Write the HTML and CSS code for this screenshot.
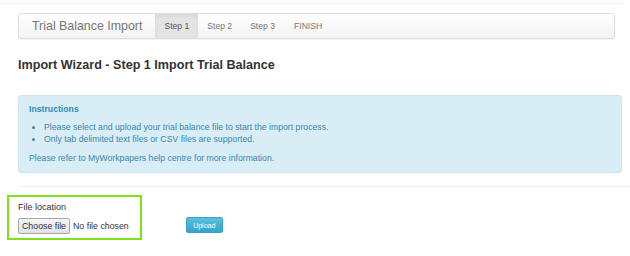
FILE: index.html
```html
<!DOCTYPE html>
<html lang="en">
<head>
  <meta charset="UTF-8" />
  <title>Trial Balance Import</title>
  <link rel="stylesheet" href="styles.css">
</head>
<body>

  <div class="topline"></div>

  <div class="navbar">
    <span class="brand">Trial Balance Import</span>
    <ul class="steps">
      <li class="active">Step 1</li>
      <li>Step 2</li>
      <li>Step 3</li>
      <li>FINISH</li>
    </ul>
  </div>

  <h1>Import Wizard - Step 1 Import Trial Balance</h1>

  <div class="alert">
    <div class="alert-title">Instructions</div>
    <ul>
      <li>Please select and upload your trial balance file to start the import process.</li>
      <li>Only tab delimited text files or CSV files are supported.</li>
    </ul>
    <p>Please refer to MyWorkpapers help centre for more information.</p>
  </div>

  <div class="divider"></div>

  <div class="upload-row">
    <div class="file-box">
      <label>File location</label>
      <div class="file-input">
        <span class="choose">Choose file</span>
        <span class="chosen">No file chosen</span>
      </div>
    </div>
    <button class="btn-upload">Upload</button>
  </div>

</body>
</html>
```

FILE: styles.css
```css
body {
  font-family: "Liberation Sans", Arial, sans-serif;
  margin: 0;
  padding: 0;
  background-color: #ffffff;
  color: #333;
}
.topline {
  height: 3px;
  border-bottom: 1px solid #f2f2f2;
  margin-right: 5px;
}
.navbar {
  display: flex;
  align-items: stretch;
  height: 24px;
  margin: 9px 15px 0 18px;
  border: 1px solid #dedede;
  border-radius: 3px;
  background: linear-gradient(#ffffff, #f3f3f3);
  box-shadow: 0 1px 2px rgba(0, 0, 0, 0.06);
}
.brand {
  font-size: 12.4px;
  color: #777;
  padding: 0 13px 0 13px;
  line-height: 24px;
}
.steps {
  display: flex;
  list-style: none;
  margin: 0;
  padding: 0;
}
.steps li {
  font-size: 8.6px;
  color: #777;
  line-height: 24px;
  padding: 0 9px 0 9px;
}
.steps li:last-child {
  padding-left: 10px;
}
.steps li.active {
  background-color: #e4e4e4;
  color: #555;
  box-shadow: inset 0 2px 4px rgba(0, 0, 0, 0.06);
}
h1 {
  font-size: 12.6px;
  font-weight: bold;
  color: #333;
  margin: 19px 0 0 18px;
}
.alert {
  margin: 23px 8px 0 18px;
  padding: 7px 10px 8px 10px;
  background-color: #d9edf7;
  border: 1px solid #cfe6f2;
  border-radius: 3px;
  color: #3a87ad;
  font-size: 8.7px;
}
.alert-title {
  font-weight: bold;
  line-height: 12px;
}
.alert ul {
  margin: 6px 0 0 0;
  padding-left: 15px;
  line-height: 12px;
}
.alert p {
  margin: 7px 0 0 0;
  line-height: 12px;
}
.divider {
  margin: 13px 0 0 18px;
  border-top: 1px solid #f0f0f0;
}
.upload-row {
  display: flex;
  align-items: flex-end;
  margin: 8px 0 0 7px;
}
.file-box {
  border: 2px solid #80e01a;
  padding: 4px 11px 4px 9px;
}
.file-box label {
  display: block;
  font-size: 9px;
  color: #333;
  line-height: 12px;
}
.file-input {
  display: flex;
  align-items: center;
  margin-top: 5px;
  font-size: 8.8px;
  color: #333;
  white-space: nowrap;
}
.choose {
  border: 1px solid #a6a6a6;
  border-radius: 2px;
  background: linear-gradient(#f5f5f5, #e2e2e2);
  padding: 1px 3px;
  line-height: 12px;
}
.chosen {
  margin-left: 3px;
}
.btn-upload {
  margin: 0 0 7px 44px;
  width: 37px;
  height: 16px;
  padding: 0;
  font-family: "Liberation Sans", Arial, sans-serif;
  font-size: 7px;
  color: #fff;
  border: 1px solid #3a9fc0;
  border-radius: 2px;
  background: linear-gradient(#5bc0de, #31a6cb);
}
```
